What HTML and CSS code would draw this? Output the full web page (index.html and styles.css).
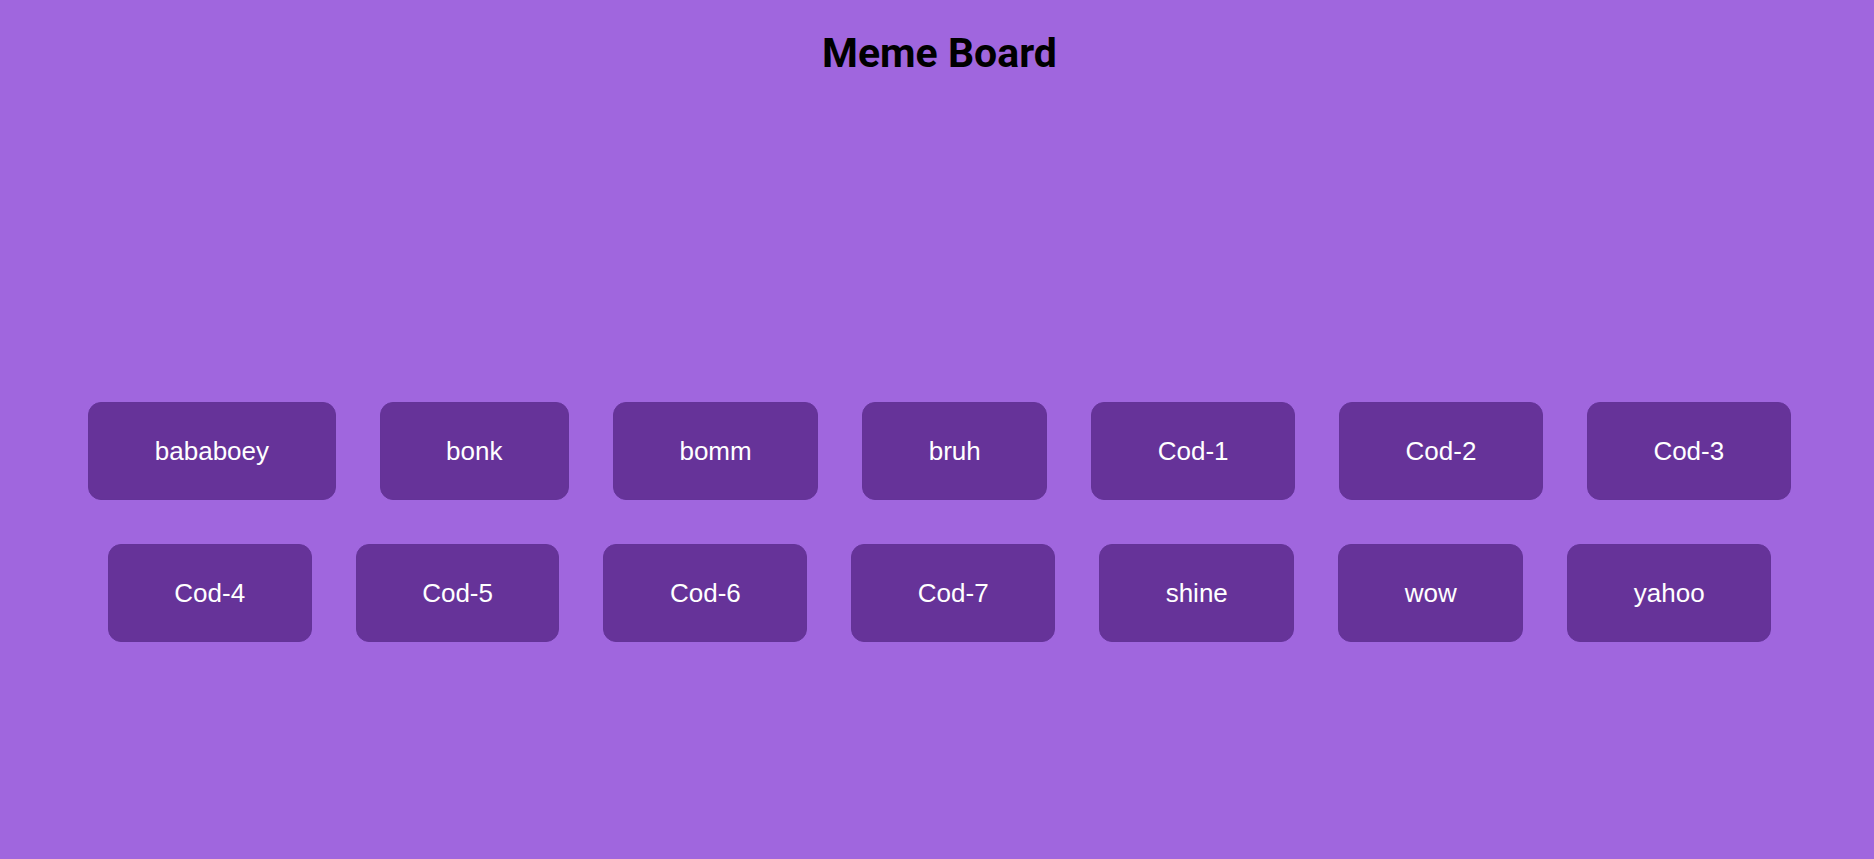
FILE: index.html
```html
<!DOCTYPE html>
<html lang="en">
<head>
<meta charset="utf-8">
<title>Meme Board</title>
<link rel="stylesheet" href="styles.css">
</head>
<body>
<div class="page">
  <h1 class="title">Meme Board</h1>
  <div class="board">
    <button class="sound">bababoey</button>
    <button class="sound">bonk</button>
    <button class="sound">bomm</button>
    <button class="sound">bruh</button>
    <button class="sound">Cod-1</button>
    <button class="sound">Cod-2</button>
    <button class="sound">Cod-3</button>
    <button class="sound">Cod-4</button>
    <button class="sound">Cod-5</button>
    <button class="sound">Cod-6</button>
    <button class="sound">Cod-7</button>
    <button class="sound">shine</button>
    <button class="sound">wow</button>
    <button class="sound">yahoo</button>
  </div>
</div>
</body>
</html>
```

FILE: styles.css
```css
html, body {
  margin: 0;
  padding: 0;
  background: #a066de;
  min-height: 100%;
}

.page {
  padding: 29px 0 0 5px;
  font-family: "Liberation Sans", Arial, sans-serif;
}

.title {
  margin: 0;
  text-align: center;
  font-family: Roboto, "Liberation Sans", sans-serif;
  font-weight: 700;
  font-size: 41px;
  line-height: 48px;
  color: #000;
}

.board {
  margin-top: 325px;
  display: flex;
  flex-wrap: wrap;
  justify-content: center;
  gap: 44px;
}

.sound {
  font-family: "Liberation Sans", Arial, sans-serif;
  font-size: 26px;
  line-height: 30px;
  color: #fff;
  background: #663399;
  border: 1px solid #643398;
  border-radius: 13px;
  padding: 33px 65.5px;
  cursor: pointer;
}
```
